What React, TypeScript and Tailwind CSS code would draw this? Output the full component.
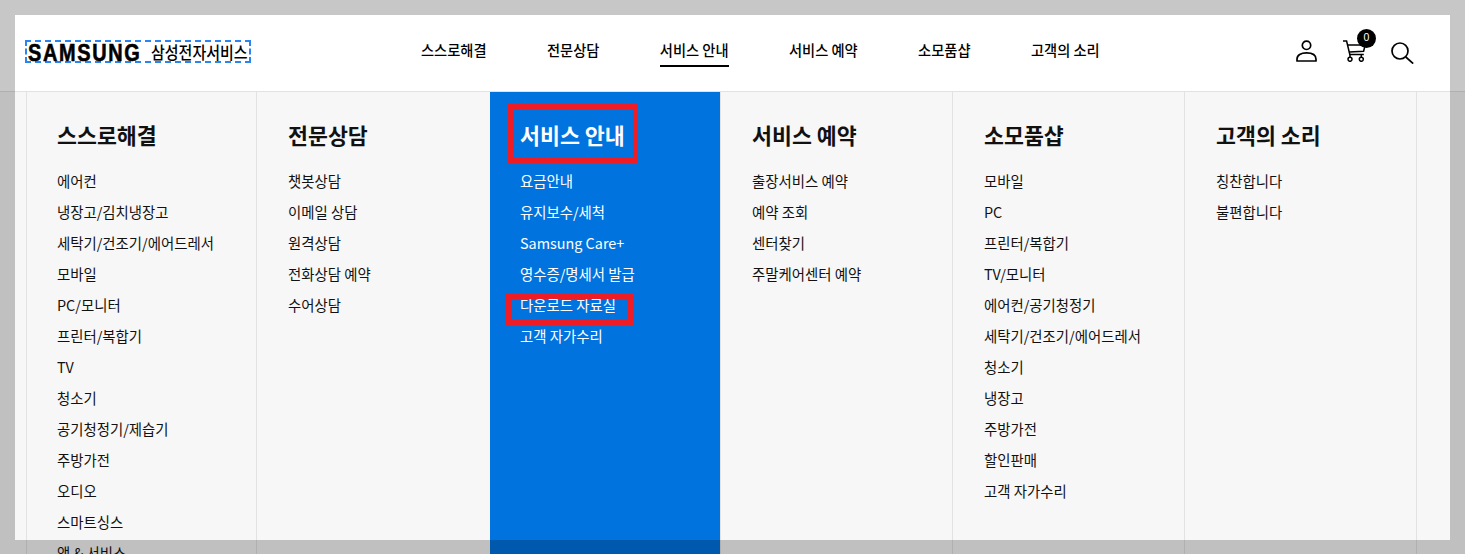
const font = { fontFamily: '"Noto Sans CJK KR", "Noto Sans", sans-serif' };

const nav = ['스스로해결', '전문상담', '서비스 안내', '서비스 예약', '소모품샵', '고객의 소리'];

const columns: { title: string; items: string[]; w: string; pad: string; active?: boolean }[] = [
  {
    title: '스스로해결',
    w: 'w-[230px]',
    pad: 'pl-[30px]',
    items: ['에어컨', '냉장고/김치냉장고', '세탁기/건조기/에어드레서', '모바일', 'PC/모니터', '프린터/복합기', 'TV', '청소기', '공기청정기/제습기', '주방가전', '오디오', '스마트싱스', '앱 & 서비스'],
  },
  { title: '전문상담', w: 'w-[234px]', pad: 'pl-[31px]', items: ['챗봇상담', '이메일 상담', '원격상담', '전화상담 예약', '수어상담'] },
  { title: '서비스 안내', w: 'w-[230px]', pad: 'pl-[30px]', active: true, items: ['요금안내', '유지보수/세척', 'Samsung Care+', '영수증/명세서 발급', '다운로드 자료실', '고객 자가수리'] },
  { title: '서비스 예약', w: 'w-[232px]', pad: 'pl-[31px]', items: ['출장서비스 예약', '예약 조회', '센터찾기', '주말케어센터 예약'] },
  { title: '소모품샵', w: 'w-[232px]', pad: 'pl-[31px]', items: ['모바일', 'PC', '프린터/복합기', 'TV/모니터', '에어컨/공기청정기', '세탁기/건조기/에어드레서', '청소기', '냉장고', '주방가전', '할인판매', '고객 자가수리'] },
  { title: '고객의 소리', w: 'w-[232px]', pad: 'pl-[31px]', items: ['칭찬합니다', '불편합니다'] },
];

function UserIcon() {
  return (
    <svg width="21" height="22" viewBox="0 0 21 22" fill="none" stroke="#000" strokeWidth="1.7">
      <circle cx="10.5" cy="5.3" r="4.2" />
      <path d="M1 21v-1.8c0-4.2 3.9-6.4 9.5-6.4s9.5 2.2 9.5 6.4V21z" strokeLinejoin="round" />
    </svg>
  );
}

function CartIcon() {
  return (
    <svg width="23" height="22" viewBox="0 0 23 22" fill="none" stroke="#000" strokeWidth="1.5">
      <path d="M0 1h3.6l3.2 13.5h14" />
      <path d="M4.6 5h17.6l-1.6 6.3L6.2 12" />
      <circle cx="7" cy="19.3" r="2" />
      <circle cx="18.3" cy="19.3" r="2" />
      <path d="M7 14.5v2.8M18.3 14.5v2.8" />
    </svg>
  );
}

function SearchIcon() {
  return (
    <svg width="23" height="22" viewBox="0 0 23 22" fill="none" stroke="#000" strokeWidth="1.7">
      <circle cx="9" cy="9" r="8" />
      <path d="M14.8 15l7.4 6.6" />
    </svg>
  );
}

export default function App() {
  return (
    <div className="relative h-[554px] w-[1465px] overflow-hidden bg-white" style={font}>
      <header className="flex h-[92px] items-center border-b border-[#e2e2e2] bg-white pt-[11px] text-black">
        <div className="ml-[25px] flex h-[23px] w-[226px] shrink-0 items-center whitespace-nowrap border-2 border-dashed border-[#2a85f0] pl-[1px]">
          <span className="mt-[3px] w-[114px] shrink-0 origin-left scale-x-[0.83] text-[24px] font-bold leading-none tracking-[2px] [-webkit-text-stroke:0.6px_black] [font-family:'Liberation_Sans',sans-serif]">SAMSUNG</span>
          <span className="ml-[9px] mt-[1px] scale-y-[1.15] text-[15px] font-medium leading-none">삼성전자서비스</span>
        </div>
        <nav className="ml-[170px] flex shrink-0 gap-[60.4px] text-[14.25px] font-medium">
          {nav.map((n, i) => (
            <a key={n} className={`flex h-[32px] items-center whitespace-nowrap border-b-2 ${i === 2 ? 'border-black' : 'border-transparent'}`}>
              {n}
            </a>
          ))}
        </nav>
        <div className="ml-auto mr-[51px] flex shrink-0 items-start pt-[1px]">
          <UserIcon />
          <div className="relative ml-[26px]">
            <CartIcon />
            <span className="absolute left-[14px] top-[-11px] flex h-[19px] w-[19px] items-center justify-center rounded-full bg-black text-[10.5px] font-medium text-white [font-family:'Liberation_Sans',sans-serif]">0</span>
          </div>
          <div className="ml-[25px] mt-[2px]">
            <SearchIcon />
          </div>
        </div>
      </header>

      <div className="flex h-[462px] bg-[#f7f7f7] pl-[26px]">
        {columns.map((c) => (
          <section
            key={c.title}
            className={`${c.w} ${c.pad} shrink-0 pt-[26px] ${c.active ? 'bg-[#0073de] text-white' : 'border-l border-[#e2e2e2] text-[#111]'}`}
          >
            <h2 className="text-[21.7px] font-bold leading-[34px]">{c.title}</h2>
            <ul className="mt-[13px] text-[14.4px]">
              {c.items.map((it) => (
                <li key={it} className="h-[31px] whitespace-nowrap leading-[31px]">{it}</li>
              ))}
            </ul>
          </section>
        ))}
        <div className="w-px shrink-0 bg-[#e2e2e2]" />
      </div>

      {/* highlight boxes */}
      <div className="absolute left-[508px] top-[104px] h-[59px] w-[130px] border-[5px] border-[#ee1c25]" />
      <div className="absolute left-[506px] top-[294px] h-[31px] w-[127px] border-[5px] border-[#ee1c25]" />

      {/* dimmed frame */}
      <div className="pointer-events-none absolute inset-0 border-b-[14px] border-l-[15px] border-r-[15px] border-t-[15px] border-black/[0.22]" />
    </div>
  );
}
